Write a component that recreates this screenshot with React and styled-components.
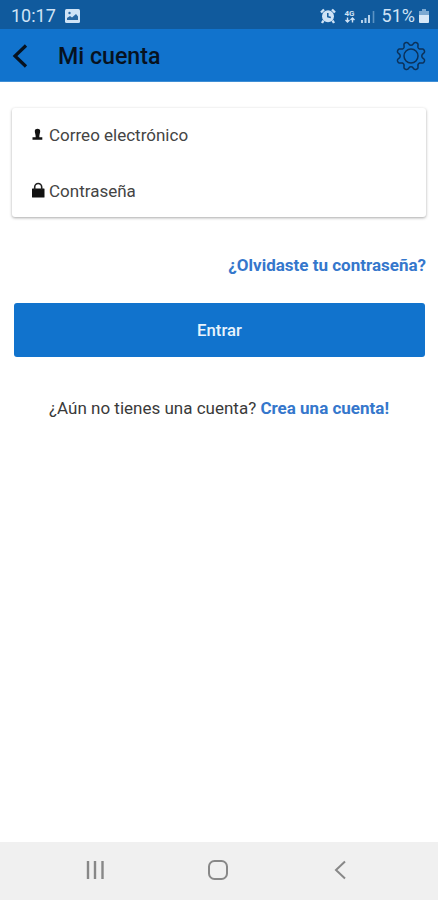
import React from "react";
import styled, { createGlobalStyle } from "styled-components";

const Global = createGlobalStyle`
  * { box-sizing: border-box; }
  body { margin: 0; background: #fff; font-family: Roboto, sans-serif; }
  button { font-family: inherit; border: 0; padding: 0; background: none; }
`;

const Screen = styled.div`
  width: 438px;
  height: 900px;
  display: flex;
  flex-direction: column;
  background: #fff;
  overflow: hidden;
`;

const StatusBar = styled.div`
  height: 29px;
  flex: none;
  display: flex;
  justify-content: space-between;
  padding: 3px 9px 0 11px;
  background: #105a9d;
  color: #cfe3f6;
`;

const StatusGroup = styled.div`
  display: flex;
  align-items: center;
  height: 26px;
`;

const StatusText = styled.span`
  font-size: 18px;
  line-height: 26px;
  margin-right: ${(p) => p.$gap || "0"};
`;

const StatusIcon = styled.svg`
  display: block;
  margin-right: ${(p) => p.$gap || "0"};
`;

const Header = styled.header`
  height: 53px;
  flex: none;
  display: flex;
  align-items: center;
  padding: 2px 11px 0 12px;
  background: #1173cd;
  border-bottom: 1px solid #3f8ed5;
`;

const IconButton = styled.button`
  display: block;
  line-height: 0;
  svg { display: block; }
`;

const Title = styled.h1`
  flex: 1;
  margin: 0 0 0 30px;
  font-size: 23.2px;
  font-weight: 500;
  line-height: 30px;
  color: #07121f;
`;

const Content = styled.main`
  flex: 1;
  display: flex;
  flex-direction: column;
  padding: 26px 12px 0;
`;

const Card = styled.div`
  height: 109px;
  display: flex;
  flex-direction: column;
  border-radius: 3px;
  background: #fff;
  box-shadow: 0 1px 3px rgba(0, 0, 0, 0.34);
`;

const Field = styled.label`
  height: 56px;
  flex: none;
  display: flex;
  align-items: center;
  padding: 0 0 2px 19px;
  font-size: 17px;
  color: #444;
  svg { flex: none; margin: 0 4px 2px 0; }
`;

const Link = styled.a`
  font-weight: 700;
  font-size: 17px;
  line-height: 22px;
  color: #3577cc;
`;

const Forgot = styled(Link)`
  align-self: flex-end;
  margin-top: 37px;
`;

const Submit = styled.button`
  height: 54px;
  margin: 27px 1px 0 2px;
  border-radius: 3px;
  background: #1173cd;
  color: #e8f3fc;
  font-size: 16.7px;
  font-weight: 500;
`;

const SignUp = styled.p`
  margin: 40px 0 0 37px;
  font-size: 17px;
  line-height: 22px;
  color: #3a3a3a;
  white-space: nowrap;
`;

const NavBar = styled.nav`
  height: 58px;
  flex: none;
  display: flex;
  align-items: center;
  justify-content: space-between;
  padding: 0 86px 2px 83px;
  background: #f0f0f0;
`;

const gearPath = (() => {
  const pts = [];
  for (let i = 0; i < 144; i++) {
    const a = (i / 144) * Math.PI * 2;
    const wave = Math.tanh(1.6 * Math.cos(8 * (a - Math.PI / 8)));
    const r = 12.6 + 1.9 * wave;
    pts.push(`${(16 + r * Math.cos(a)).toFixed(2)} ${(16 + r * Math.sin(a)).toFixed(2)}`);
  }
  return `M${pts.join("L")}Z`;
})();

export default function App() {
  return (
    <>
      <Global />
      <Screen>
        <StatusBar>
          <StatusGroup>
            <StatusText $gap="9px">10:17</StatusText>
            <StatusIcon width="15" height="14" viewBox="0 0 15 14">
              <rect width="15" height="14" rx="1.5" fill="#cfe3f6" />
              <path d="M2 11V9l3-2 2 1.5L11 5l2 2.500V11Z" fill="#2868a3" />
              <circle cx="4.5" cy="4" r="1.2" fill="#2868a3" />
            </StatusIcon>
          </StatusGroup>
          <StatusGroup>
            <StatusIcon width="16" height="16" viewBox="0 0 16 16" $gap="8px">
              <circle cx="8" cy="8.3" r="6" fill="#cfe3f6" />
              <path d="M1 4.500 4 1.500M15 4.500l-3-3M3.500 12.500 2 15M12.500 12.500 14 15" stroke="#cfe3f6" strokeWidth="2.4" />
              <path d="M7.800 5v3.700l3 .800" stroke="#105a9d" strokeWidth="1.5" fill="none" />
            </StatusIcon>
            <StatusIcon width="12" height="16" viewBox="0 0 12 16" $gap="5px">
              <text x="0.5" y="7.5" fontSize="8" fontWeight="700" fill="#cfe3f6">4G</text>
              <path d="M3.500 14V9.500M1.500 12l2 2 2-2M8.500 14.500V10M6.500 12l2-2 2 2" stroke="#cfe3f6" strokeWidth="1.4" fill="none" />
            </StatusIcon>
            <StatusIcon width="14" height="15" viewBox="0 0 14 15" $gap="7px">
              <path d="M1 14v-3M4.5 14V9M8 14V6" stroke="#b5d2ec" strokeWidth="2" />
              <path d="M12.5 14V2" stroke="#5c93c4" strokeWidth="1.6" />
            </StatusIcon>
            <StatusText $gap="4px">51%</StatusText>
            <StatusIcon width="10" height="14" viewBox="0 0 10 14">
              <path d="M3 0h4v2h3v4H0V2h3Z" fill="#7ba9d2" />
              <path d="M0 6h10v7a1 1 0 0 1-1 1H1a1 1 0 0 1-1-1Z" fill="#d7e8f7" />
            </StatusIcon>
          </StatusGroup>
        </StatusBar>
        <Header>
          <IconButton aria-label="Volver">
            <svg width="16" height="24" viewBox="0 0 16 24">
              <path d="M14 1.500 3 12 14 22.500" fill="none" stroke="#07121f" strokeWidth="3.200" />
            </svg>
          </IconButton>
          <Title>Mi cuenta</Title>
          <IconButton aria-label="Ajustes">
            <svg width="32" height="32" viewBox="0 0 32 32" fill="none" stroke="#0b3159" strokeWidth="1.500">
              <path d={gearPath} strokeLinejoin="round" />
              <circle cx="16" cy="16" r="7" />
            </svg>
          </IconButton>
        </Header>
        <Content>
          <Card>
            <Field>
              <svg width="14" height="14" viewBox="0 0 14 14">
                <path d="M3.800 4C3.800.900 9.200.900 9.200 4 9.200 6 8.300 7.500 8.300 10.200H11.300V12.700H1.500V10.200H4.700C4.700 7.500 3.800 6 3.800 4Z" fill="#111" />
              </svg>
              Correo electrónico
            </Field>
            <Field>
              <svg width="14" height="16" viewBox="0 0 14 16">
                <rect x="1" y="6.500" width="12.500" height="9" rx="0.5" fill="#111" />
                <path d="M3.700 8V5a3.500 3.500 0 0 1 7 0v3" fill="none" stroke="#222" strokeWidth="1.600" />
              </svg>
              Contraseña
            </Field>
          </Card>
          <Forgot>¿Olvidaste tu contraseña?</Forgot>
          <Submit>Entrar</Submit>
          <SignUp>
            ¿Aún no tienes una cuenta? <Link>Crea una cuenta!</Link>
          </SignUp>
        </Content>
        <NavBar>
          <IconButton aria-label="Recientes">
            <svg width="24" height="24" viewBox="0 0 24 24">
              <path d="M5 3v18M12 3v18M19.500 3v18" stroke="#888" strokeWidth="2.400" />
            </svg>
          </IconButton>
          <IconButton aria-label="Inicio">
            <svg width="24" height="24" viewBox="0 0 24 24">
              <rect x="3" y="3" width="18" height="18" rx="5.500" fill="none" stroke="#888" strokeWidth="2" />
            </svg>
          </IconButton>
          <IconButton aria-label="Atrás">
            <svg width="24" height="24" viewBox="0 0 24 24">
              <path d="m17 3.500-9 8.500 9 8.500" fill="none" stroke="#888" strokeWidth="2" />
            </svg>
          </IconButton>
        </NavBar>
      </Screen>
    </>
  );
}
